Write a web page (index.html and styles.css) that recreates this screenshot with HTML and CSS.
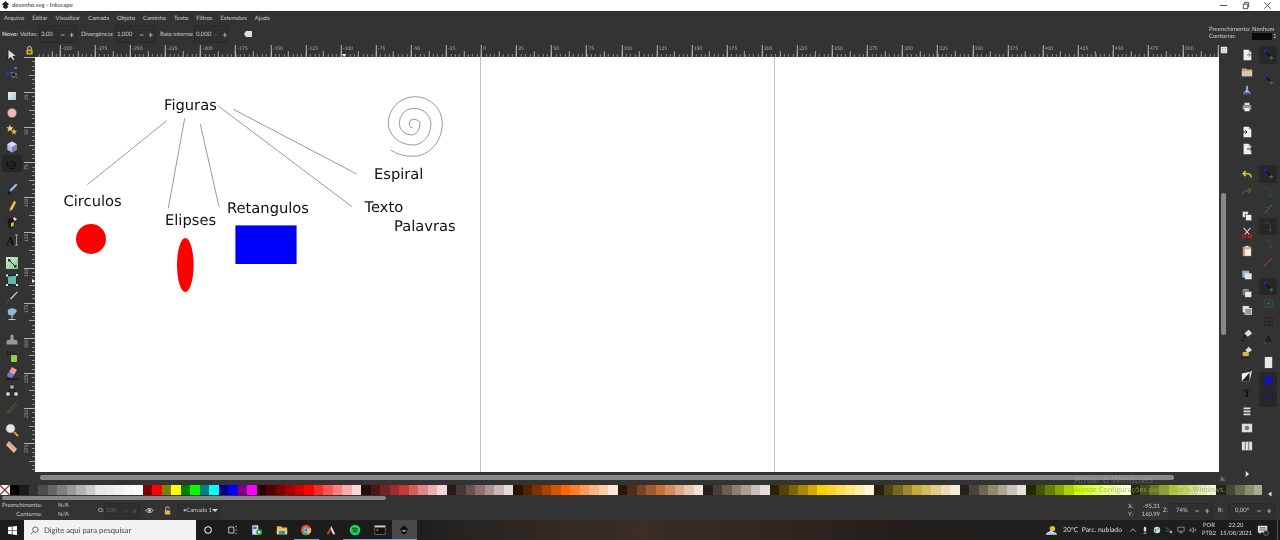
FILE: index.html
```html
<!DOCTYPE html>
<html lang="pt-BR">
<head>
<meta charset="utf-8">
<title>desenho.svg - Inkscape</title>
<link rel="stylesheet" href="styles.css">
</head>
<body>
<svg class="defs" aria-hidden="true">
  <symbol id="snapnode" viewBox="0 0 14 14"><path d="M4 4L10 10" stroke="#111" stroke-width="1.6"/><rect x="2" y="2" width="3" height="3" fill="#2222cc"/><path d="M10 8.5v4M8 10.5h4" stroke="#2f7a3a" stroke-width="1.4"/></symbol>
  <symbol id="snapcurve" viewBox="0 0 14 14"><path d="M3 3C9 3 10 7 9 11" fill="none" stroke="#2f5535" stroke-width="1"/><path d="M9 9v4M7 11h4" stroke="#2a5a34" stroke-width="1"/></symbol>
  <symbol id="snapline" viewBox="0 0 14 14"><path d="M3 12L11 3" stroke="#3d7040" stroke-width="1.1"/><path d="M3 6h5" stroke="#2f5a36"/></symbol>
  <symbol id="doc" viewBox="0 0 14 14"><path d="M3 1h6l3 3v9H3z" fill="#eee"/><path d="M9 1v3h3" fill="#aaa"/></symbol>
</svg>
<div class="app">
  <header class="titlebar">
    <svg class="tlogo" viewBox="0 0 10 10"><path d="M5 0L9 4 7 5 8 7 5 9 2 7 3 5 1 4z" fill="#222"/></svg>
    <span class="ttext">desenho.svg - Inkscape</span>
    <div class="winctl">
      <svg viewBox="0 0 10 10"><path d="M1 5h8" stroke="#444"/></svg>
      <svg viewBox="0 0 10 10"><path d="M2.5 3.5h5v5h-5zM4 3.5V1.5h4.500v5H7.500" fill="none" stroke="#444"/></svg>
      <svg viewBox="0 0 10 10"><path d="M1.500 1.500l7 7M8.500 1.500l-7 7" stroke="#444"/></svg>
    </div>
  </header>
  <nav class="menubar">
    <span>Arquivo</span><span>Editar</span><span>Visualizar</span><span>Camada</span><span>Objeto</span><span>Caminho</span><span>Texto</span><span>Filtros</span><span>Extensões</span><span>Ajuda</span>
  </nav>
  <div class="toolbar">
    <b class="tl-new">Novo:</b><span class="tl-v">Voltas:</span>
    <div class="spin spin-a"><span class="val">3,00</span><i>−</i><i>+</i></div>
    <span class="tl-lab">Divergência:</span>
    <div class="spin spin-b"><span class="val">1,000</span><i>−</i><i>+</i></div>
    <span class="tl-lab">Raio interno:</span>
    <div class="spin spin-c"><span class="val">0,000</span><i class="dim">−</i><i>+</i></div>
    <svg class="tl-erase" viewBox="0 0 10 8"><path d="M3 1h6v6H3L1 4z" fill="#ddd"/></svg>
    <div class="fillstroke">
      <div>Preenchimento: Nenhum</div>
      <div class="fs-row"><span class="fs-lab">Contorno:</span><span class="fs-swatch"></span><span>1</span></div>
    </div>
  </div>

  <div class="workspace">
    <aside class="toolbox">
      <div class="tool"><svg viewBox="0 0 14 14"><path d="M3 1V12L6 9.500 8 13 10 12 8 8.500 11.500 8z" fill="#ddd" stroke="#111" stroke-width=".8"/></svg></div>
      <div class="tool g1"><svg viewBox="0 0 14 14"><path d="M2 7L9 2" stroke="#335" stroke-width=".8"/><circle cx="3" cy="8" r="2" fill="#2233cc"/><rect x="9" y="1" width="3" height="2" fill="#5566cc"/><path d="M6 6L8 12 9 10 11.500 12 12.500 11 10 9 12 8z" fill="#111" stroke="#bbb" stroke-width=".5"/></svg></div>
      <div class="tool g6"><svg viewBox="0 0 14 14"><defs><linearGradient id="gr1" x1="0" y1="0" x2="1" y2="1"><stop offset="0" stop-color="#eef3f8"/><stop offset="1" stop-color="#a9c3dc"/></linearGradient></defs><rect x="2.500" y="2.500" width="9" height="9" fill="url(#gr1)" stroke="#333"/></svg></div>
      <div class="tool"><svg viewBox="0 0 14 14"><circle cx="7" cy="7" r="4.700" fill="#f0b6bf" stroke="#555" stroke-width=".6"/></svg></div>
      <div class="tool"><svg viewBox="0 0 14 14"><path d="M5 1.500l1.200 2.500 2.700.3-2 1.800.6 2.700L5 7.500 2.600 8.800l.5-2.700-2-1.800 2.700-.3z" fill="#e8d56a" stroke="#444" stroke-width=".4"/><path d="M9 5.500l1 2 2.300.3-1.700 1.500.4 2.300L9 10.500l-2 1.100.4-2.300-1.700-1.500L8 7.500z" fill="#d8c040" stroke="#444" stroke-width=".4"/></svg></div>
      <div class="tool"><svg viewBox="0 0 14 14"><path d="M7 1.500l4.700 2.700v5.600L7 12.500 2.300 9.800V4.200z" fill="#b4b6e6"/><path d="M7 7l4.700-2.800v5.600L7 12.500z" fill="#7d80bd"/><path d="M7 7L2.300 4.200 7 1.500l4.700 2.700z" fill="#d6d8f4"/></svg></div>
      <div class="tool tool-on"><svg viewBox="0 0 14 14"><path d="M7 7.500c1-1 2-.2 1.600 1-.5 1.300-2.800 1.500-3.800 0-1.100-1.700.2-4 2.400-4 2.500 0 4 2.400 3 4.700-1.100 2.400-4.200 3-6.400 1.500C2 9.300 1.500 6.500 3 4.300" fill="none" stroke="#0c0c0c" stroke-width="1"/></svg></div>
      <div class="tool g8"><svg viewBox="0 0 14 14"><path d="M11 1.500l1.500 1.500L6 9.500 4.500 8z" fill="#9fc3dd"/><path d="M4 9.500C3 9.500 3 11 2 12.500 4 12.500 5.500 11.500 5.500 10.500z" fill="#111"/></svg></div>
      <div class="tool"><svg viewBox="0 0 14 14"><path d="M9 1.500l2.500 1.500-4 8-3 1.500.3-3.300z" fill="#edc547" stroke="#222" stroke-width=".5"/></svg></div>
      <div class="tool"><svg viewBox="0 0 14 14"><path d="M3 3C2 7 3 11 6 13c3-2 4-5 3-9L7 2z" fill="#191919"/><path d="M6 7l3-1-.5 4L6 11z" fill="#e4c23f"/><path d="M9 1l3 2-2 2-2-2z" fill="#ddd"/></svg></div>
      <div class="tool"><svg viewBox="0 0 14 14"><text x="1" y="11.500" class="ic-a">A</text><path d="M11.500 2v10M10 2h3M10 12h3" stroke="#bbb" stroke-width=".8"/></svg></div>
      <div class="tool g6"><svg viewBox="0 0 14 14"><defs><linearGradient id="gr2" x1="0" y1="0" x2="1" y2="1"><stop offset="0" stop-color="#d8ecd8"/><stop offset="1" stop-color="#7cc58a"/></linearGradient></defs><rect x="1" y="1" width="12" height="12" fill="url(#gr2)"/><path d="M4 4L10 10" stroke="#222"/><rect x="3" y="3" width="2.500" height="2.500" fill="#333"/><rect x="9" y="9" width="2.500" height="2.500" fill="#333"/></svg></div>
      <div class="tool"><svg viewBox="0 0 14 14"><path d="M2 3L12 2 11.500 12 2.500 11.500z" fill="#62b7a5" stroke="#111"/><g fill="#eee"><rect x="1" y="1.500" width="2" height="2"/><rect x="11" y="1" width="2" height="2"/><rect x="11" y="11" width="2" height="2"/><rect x="1" y="11" width="2" height="2"/></g></svg></div>
      <div class="tool"><svg viewBox="0 0 14 14"><path d="M12 1.500l.8.800L6 9.500 5 8.500z" fill="#ccc"/><path d="M5 8.500L2 12.500l4-3z" fill="#111" stroke="#999" stroke-width=".3"/></svg></div>
      <div class="tool"><svg viewBox="0 0 14 14"><path d="M4 2c3-1.500 7-.5 8 2l-4 5-4-1C2 6 2.500 3 4 2z" fill="#8fb8d4"/><path d="M7 9v2.500M3.500 12.500h7" stroke="#bfc9bf" stroke-width="1.200"/></svg></div>
      <div class="tool g8"><svg viewBox="0 0 14 14"><path d="M1.500 12.500v-4l4-1V4c0-2 3-2 3 0v3.500l4 1v4z" fill="#9a9a9a"/></svg></div>
      <div class="tool"><svg viewBox="0 0 14 14"><rect x="6" y="6" width="6" height="7" rx="1" fill="#8ed04a"/><rect x="7.500" y="4" width="3" height="2" fill="#222"/><g fill="#111"><rect x="2" y="2" width="1.500" height="1.500"/><rect x="4.500" y="3.500" width="1.500" height="1.500"/><rect x="2" y="5" width="1.500" height="1.500"/></g></svg></div>
      <div class="tool"><svg viewBox="0 0 14 14"><path d="M7 1l5 3-3 5-5-3z" fill="#ee9999"/><path d="M4 6l5 3-2 3-4-1-1-2z" fill="#7777dd"/><path d="M1 13h12" stroke="#111"/></svg></div>
      <div class="tool"><svg viewBox="0 0 14 14"><path d="M7 5L3 10M7 5l4 5" stroke="#111"/><rect x="5" y="2" width="4" height="4" fill="#9fb8cc" stroke="#111" stroke-width=".6"/><rect x="1" y="9" width="4" height="4" fill="#ddd" stroke="#111" stroke-width=".6"/><rect x="9" y="9" width="4" height="4" fill="#ddd" stroke="#111" stroke-width=".6"/></svg></div>
      <div class="tool"><svg viewBox="0 0 14 14"><path d="M2 12L11 3M5 12L12 5M2 12h4" stroke="#59653e" stroke-width=".9" fill="none"/></svg></div>
      <div class="tool g6"><svg viewBox="0 0 14 14"><circle cx="5.500" cy="5.500" r="4.300" fill="#dfe6ec" stroke="#bbb" stroke-width=".6"/><path d="M9 9l4 4" stroke="#e0a030" stroke-width="2"/></svg></div>
      <div class="tool"><svg viewBox="0 0 14 14"><path d="M4 1l8 8-3 4L1 5z" fill="#e8b8a0"/><path d="M4 3.500l1 1M6 5.500l1 1M8 7.500l1 1" stroke="#555" stroke-width=".7"/></svg></div>
    </aside>

    <div class="center">
      <div class="ruler-row">
        <div class="corner"><svg viewBox="0 0 10 10"><rect x="1.500" y="4" width="7" height="5.500" rx=".5" fill="#d9a520"/><path d="M3 4V2.500a2 2 0 0 1 4 0V4" fill="none" stroke="#ddd"/><rect x="3.500" y="6" width="3" height="1.500" fill="#222"/></svg></div>
        <div class="hruler">
          <div class="rlabels"><span>-300</span><span>-275</span><span>-250</span><span>-225</span><span>-200</span><span>-175</span><span>-150</span><span>-125</span><span>-100</span><span>-75</span><span>-50</span><span>-25</span><span>0</span><span>25</span><span>50</span><span>75</span><span>100</span><span>125</span><span>150</span><span>175</span><span>200</span><span>225</span><span>250</span><span>275</span><span>300</span><span>325</span><span>350</span><span>375</span><span>400</span><span>425</span><span>450</span><span>475</span><span>500</span></div>
          <i class="hmark"></i>
        </div>
        <div class="corner2"><svg viewBox="0 0 10 10"><rect x="1" y="1" width="8" height="8" rx="1" fill="#eee"/><rect x="3" y="3" width="4" height="4" fill="none" stroke="#999" stroke-width=".7"/></svg></div>
      </div>
      <div class="mid">
        <div class="vruler">
          <div class="vlabels"><span>25</span><span>50</span><span>75</span><span>100</span><span>125</span><span>150</span><span>175</span><span>200</span><span>225</span><span>250</span><span>275</span></div>
          <i class="vmark"></i>
        </div>
        <main class="canvas">
          <svg class="drawing" viewBox="35 57 1184 415">
            <path class="guide" d="M480.500 57V472M774.500 57V472"/>
            <g class="links">
              <path d="M166.700 120.700L87.300 184.700"/>
              <path d="M184.700 118.300L168.300 208.300"/>
              <path d="M200.300 124L219 206.700"/>
              <path d="M218.300 106L352 206.700"/>
              <path d="M233.300 109.300L356.700 174"/>
            </g>
            <path class="spiral" d="M390.700 150Q400 156.300 413.300 156.300A29 33 0 0 0 442.300 123.300A27.300 26.600 0 0 0 415 96.700A26.700 26.600 0 0 0 388.300 123.300A25 21.700 0 0 0 413.300 145A17.700 21.700 0 0 0 431 123.300A17.700 15 0 0 0 413.300 108.300A14 15 0 0 0 399.300 123.300A12.400 11.700 0 0 0 411.700 135A8.300 11.700 0 0 0 420 123.300A6.700 4 0 0 0 413.300 119.300A4 4 0 0 0 409.300 123.300A3.200 4.400 0 0 0 412.500 127.700"/>
            <g class="labels">
              <text x="164" y="109.500">Figuras</text>
              <text x="63.500" y="206">Circulos</text>
              <text x="165" y="225">Elipses</text>
              <text x="227" y="213">Retangulos</text>
              <text x="374" y="178.500">Espiral</text>
              <text x="364.500" y="212">Texto</text>
              <text x="394" y="231">Palavras</text>
            </g>
            <circle class="red" cx="91" cy="239" r="15"/>
            <ellipse class="red" cx="185.300" cy="265" rx="8.300" ry="27"/>
            <rect class="blue" x="235.400" y="225.400" width="61.200" height="38.600"/>
          </svg>
        </main>
        <div class="vscroll"><i></i></div>
      </div>
      <div class="hscroll"><i></i><svg viewBox="0 0 10 10"><path d="M1 9V1L9 9z" fill="#30a030"/><path d="M2 1L9 5 5 6z" fill="#3355dd"/><path d="M1 9L6 6 9 9z" fill="#dd3355"/></svg></div>
    </div>

    <aside class="dock">
      <div class="cmds">
        <div class="cmd"><svg viewBox="0 0 14 14"><use href="#doc"/><path d="M7 7h4M9 5l2 2-2 2" stroke="#36a" fill="none"/></svg></div>
        <div class="cmd"><svg viewBox="0 0 14 14"><path d="M1 3h5l1 1h6v8H1z" fill="#bda985"/><path d="M1 6h12v6H1z" fill="#d8c8a8"/></svg></div>
        <div class="cmd"><svg viewBox="0 0 14 14"><path d="M6 2h2v5l3 3v2H3v-2l3-3z" fill="#a8b4dc"/><path d="M3 10h8v2H3z" fill="#3a4fa8"/></svg></div>
        <div class="cmd"><svg viewBox="0 0 14 14"><path d="M4 2h6v3H4z" fill="#ddd"/><path d="M2 5h10v5H2z" fill="#999"/><path d="M4 8h6v4H4z" fill="#eee"/></svg></div>
        <div class="cmd g7"><svg viewBox="0 0 14 14"><use href="#doc"/><path d="M1 7h6M5 5l2 2-2 2" stroke="#111" fill="none"/></svg></div>
        <div class="cmd"><svg viewBox="0 0 14 14"><use href="#doc"/><path d="M7 7h6M11 5l2 2-2 2" stroke="#111" fill="none"/></svg></div>
        <div class="cmd g7"><svg viewBox="0 0 14 14"><path d="M12 11C12 7 8 6 3 6.500M5.500 3.500L2.500 6.500l3 3" fill="none" stroke="#d9c23c" stroke-width="1.800"/></svg></div>
        <div class="cmd"><svg viewBox="0 0 14 14"><path d="M2 11C2 7 6 6 11 6.500M8.500 3.500l3 3-3 3" fill="none" stroke="#4d5c3c" stroke-width="1.600"/></svg></div>
        <div class="cmd g7"><svg viewBox="0 0 14 14"><rect x="1.500" y="1.500" width="7" height="7" fill="#ddd" stroke="#333" stroke-width=".6"/><rect x="5.500" y="5.500" width="7" height="7" fill="#eee" stroke="#333" stroke-width=".6"/></svg></div>
        <div class="cmd"><svg viewBox="0 0 14 14"><path d="M3 1l7 8M11 1L4 9" stroke="#ddd" stroke-width="1.200"/><circle cx="3.500" cy="10.500" r="2" fill="none" stroke="#d02020" stroke-width="1.400"/><circle cx="10.500" cy="10.500" r="2" fill="none" stroke="#d02020" stroke-width="1.400"/></svg></div>
        <div class="cmd"><svg viewBox="0 0 14 14"><rect x="2" y="2" width="10" height="11" fill="#c8a060"/><rect x="4.500" y="4.500" width="7" height="8" fill="#eee"/><rect x="5" y="1" width="4" height="2" fill="#ddd"/></svg></div>
        <div class="cmd g7"><svg viewBox="0 0 14 14"><rect x="1.500" y="2" width="8" height="8" fill="#9fb0c0"/><rect x="4.500" y="5" width="8" height="7" fill="#dbe5ef"/></svg></div>
        <div class="cmd"><svg viewBox="0 0 14 14"><rect x="1.500" y="2" width="8" height="8" fill="#888" stroke="#222" stroke-width=".5"/><rect x="4.500" y="5" width="8" height="7" fill="#e8e8e8" stroke="#222" stroke-width=".5"/></svg></div>
        <div class="cmd"><svg viewBox="0 0 14 14"><rect x="1.500" y="2" width="8" height="8" fill="#ddd" stroke="#222" stroke-width=".5"/><rect x="4.500" y="5" width="8" height="7" fill="#999" stroke="#eee" stroke-width=".8"/></svg></div>
        <div class="cmd g7"><svg viewBox="0 0 14 14"><path d="M9 1l4 4-5 4-4-4z" fill="#ddd"/><path d="M2 11l1.500-3 2 2z" fill="#112"/><path d="M1 13h3M1 3h2" stroke="#111"/></svg></div>
        <div class="cmd"><svg viewBox="0 0 14 14"><path d="M9 1l4 4-5 3-3-3z" fill="#ddd"/><path d="M2 7h7v5H2z" fill="#d8b850"/><path d="M1 13h8" stroke="#111"/></svg></div>
        <div class="cmd g6"><svg viewBox="0 0 14 14"><path d="M1 13V4L11 2 13 1 12 4 10 13z" fill="#eee"/><path d="M1 13L10 3 10 13z" fill="#222"/><path d="M9 3l4-2-1 3z" fill="#d8b850"/></svg></div>
        <div class="cmd"><svg viewBox="0 0 14 14"><text x="7" y="11.500" class="ic-t">T</text></svg></div>
        <div class="cmd"><svg viewBox="0 0 14 14"><path d="M3 3h8v2H3zM3 6.500h8v2H3zM3 10h8v2H3z" fill="#ddd"/></svg></div>
        <div class="cmd"><svg viewBox="0 0 14 14"><rect x="1" y="2" width="12" height="10" fill="#ddd"/><circle cx="7" cy="7" r="2.500" fill="#777"/></svg></div>
        <div class="cmd"><svg viewBox="0 0 14 14"><rect x="1" y="2" width="12" height="10" fill="#ddd"/><path d="M5 2v10M9 2v10" stroke="#666"/></svg></div>
        <div class="cmd garrow"><svg viewBox="0 0 14 14"><path d="M5.500 3.500L9.500 7l-4 3.500z" fill="#ddd"/></svg></div>
      </div>
      <div class="snaps">
        <div class="snap on"><svg viewBox="0 0 14 14"><use href="#snapnode"/></svg></div>
        <div class="snap s7"><svg viewBox="0 0 14 14"><use href="#snapnode"/></svg></div>
        <div class="snap s14"><svg viewBox="0 0 14 14"><path d="M3 3h8v8H3z" fill="none" stroke="#383838"/></svg></div>
        <div class="snap s20"><svg viewBox="0 0 14 14"><path d="M3 3h8v8H3z" fill="none" stroke="#383838"/></svg></div>
        <div class="snap on s6"><svg viewBox="0 0 14 14"><use href="#snapnode"/></svg></div>
        <div class="snap"><svg viewBox="0 0 14 14"><use href="#snapcurve"/></svg></div>
        <div class="snap"><svg viewBox="0 0 14 14"><use href="#snapline"/></svg></div>
        <div class="snap on"><svg viewBox="0 0 14 14"><use href="#snapcurve"/></svg></div>
        <div class="snap"><svg viewBox="0 0 14 14"><use href="#snapcurve"/></svg></div>
        <div class="snap"><svg viewBox="0 0 14 14"><path d="M3 12L11 3" stroke="#a83030" stroke-width="1.200"/><path d="M2 10l2 2" stroke="#3d7040"/></svg></div>
        <div class="snap on s7"><svg viewBox="0 0 14 14"><use href="#snapnode"/></svg></div>
        <div class="snap"><svg viewBox="0 0 14 14"><rect x="3" y="3" width="8" height="8" fill="none" stroke="#2f5a36"/><path d="M7 5v4M5 7h4" stroke="#2f6a3a"/></svg></div>
        <div class="snap"><svg viewBox="0 0 14 14"><rect x="3" y="3" width="8" height="8" fill="none" stroke="#222"/><path d="M7 5v4M5 7h4" stroke="#222"/></svg></div>
        <div class="snap"><svg viewBox="0 0 14 14"><text x="7" y="11" class="ic-sa">A</text><path d="M2 12h3" stroke="#3d7040"/></svg></div>
        <div class="snap s6"><svg viewBox="0 0 14 14"><path d="M3 1h8v12H3z" fill="#e8e8e8"/></svg></div>
        <div class="snap on"><svg viewBox="0 0 14 14"><rect x="2.500" y="2.500" width="9" height="9" fill="#1414a8"/></svg></div>
        <div class="snap on"><svg viewBox="0 0 14 14"><path d="M3 3v8M11 3v8M7 5v4" stroke="#1a1a70" stroke-width="1.500"/></svg></div>
      </div>
    </aside>
  </div>

  <div class="palette">
    <span class="sw sw-none"><svg viewBox="0 0 10 10"><path d="M0 0l10 10M10 0L0 10" stroke="#8a2020" stroke-width="1.200"/></svg></span><span class="sw" style="background:#000"></span><span class="sw" style="background:#1a1a1a"></span><span class="sw" style="background:#333"></span><span class="sw" style="background:#4d4d4d"></span><span class="sw" style="background:#666"></span><span class="sw" style="background:#808080"></span><span class="sw" style="background:#999"></span><span class="sw" style="background:#b3b3b3"></span><span class="sw" style="background:#ccc"></span><span class="sw" style="background:#e6e6e6"></span><span class="sw" style="background:#ececec"></span><span class="sw" style="background:#f2f2f2"></span><span class="sw" style="background:#f9f9f9"></span><span class="sw" style="background:#fff"></span><span class="sw" style="background:#800000"></span><span class="sw" style="background:#f00"></span><span class="sw" style="background:#808000"></span><span class="sw" style="background:#ff0"></span><span class="sw" style="background:#008000"></span><span class="sw" style="background:#0f0"></span><span class="sw" style="background:#008080"></span><span class="sw" style="background:#0ff"></span><span class="sw" style="background:#000080"></span><span class="sw" style="background:#00f"></span><span class="sw" style="background:#800080"></span><span class="sw" style="background:#f0f"></span><span class="sw" style="background:#2b0000"></span><span class="sw" style="background:#500"></span><span class="sw" style="background:#800000"></span><span class="sw" style="background:#a00"></span><span class="sw" style="background:#d40000"></span><span class="sw" style="background:#f00"></span><span class="sw" style="background:#ff2a2a"></span><span class="sw" style="background:#f55"></span><span class="sw" style="background:#ff8080"></span><span class="sw" style="background:#faa"></span><span class="sw" style="background:#ffd5d5"></span><span class="sw" style="background:#280b0b"></span><span class="sw" style="background:#501616"></span><span class="sw" style="background:#782121"></span><span class="sw" style="background:#a02c2c"></span><span class="sw" style="background:#c83737"></span><span class="sw" style="background:#d35f5f"></span><span class="sw" style="background:#de8787"></span><span class="sw" style="background:#e9afaf"></span><span class="sw" style="background:#f4d7d7"></span><span class="sw" style="background:#241c1c"></span><span class="sw" style="background:#483737"></span><span class="sw" style="background:#6c5353"></span><span class="sw" style="background:#916f6f"></span><span class="sw" style="background:#ac9393"></span><span class="sw" style="background:#c8b7b7"></span><span class="sw" style="background:#e3dbdb"></span><span class="sw" style="background:#2b1100"></span><span class="sw" style="background:#520"></span><span class="sw" style="background:#803300"></span><span class="sw" style="background:#a40"></span><span class="sw" style="background:#d45500"></span><span class="sw" style="background:#f60"></span><span class="sw" style="background:#ff7f2a"></span><span class="sw" style="background:#f95"></span><span class="sw" style="background:#ffb380"></span><span class="sw" style="background:#fca"></span><span class="sw" style="background:#ffe6d5"></span><span class="sw" style="background:#28170b"></span><span class="sw" style="background:#502d16"></span><span class="sw" style="background:#784421"></span><span class="sw" style="background:#a05a2c"></span><span class="sw" style="background:#c87137"></span><span class="sw" style="background:#d38d5f"></span><span class="sw" style="background:#deaa87"></span><span class="sw" style="background:#e9c6af"></span><span class="sw" style="background:#f4e3d7"></span><span class="sw" style="background:#241f1c"></span><span class="sw" style="background:#483e37"></span><span class="sw" style="background:#6c5d53"></span><span class="sw" style="background:#917c6f"></span><span class="sw" style="background:#ac9d93"></span><span class="sw" style="background:#c8beb7"></span><span class="sw" style="background:#e3dedb"></span><span class="sw" style="background:#2b2200"></span><span class="sw" style="background:#540"></span><span class="sw" style="background:#806600"></span><span class="sw" style="background:#a80"></span><span class="sw" style="background:#d4aa00"></span><span class="sw" style="background:#fc0"></span><span class="sw" style="background:#ffd42a"></span><span class="sw" style="background:#fd5"></span><span class="sw" style="background:#ffe680"></span><span class="sw" style="background:#fea"></span><span class="sw" style="background:#fff6d5"></span><span class="sw" style="background:#28220b"></span><span class="sw" style="background:#504416"></span><span class="sw" style="background:#786721"></span><span class="sw" style="background:#a0892c"></span><span class="sw" style="background:#c8ab37"></span><span class="sw" style="background:#d3bc5f"></span><span class="sw" style="background:#decd87"></span><span class="sw" style="background:#e9ddaf"></span><span class="sw" style="background:#f4eed7"></span><span class="sw" style="background:#24221c"></span><span class="sw" style="background:#484537"></span><span class="sw" style="background:#6c6753"></span><span class="sw" style="background:#918a6f"></span><span class="sw" style="background:#aca793"></span><span class="sw" style="background:#c8c4b7"></span><span class="sw" style="background:#e3e2db"></span><span class="sw" style="background:#222b00"></span><span class="sw" style="background:#450"></span><span class="sw" style="background:#668000"></span><span class="sw" style="background:#8a0"></span><span class="sw" style="background:#aad400"></span><span class="sw" style="background:#cf0"></span><span class="sw" style="background:#d4ff2a"></span><span class="sw" style="background:#df5"></span><span class="sw" style="background:#e5ff80"></span><span class="sw" style="background:#efa"></span><span class="sw" style="background:#f6ffd5"></span><span class="sw" style="background:#22280b"></span><span class="sw" style="background:#445016"></span><span class="sw" style="background:#677821"></span><span class="sw" style="background:#89a02c"></span><span class="sw" style="background:#abc837"></span><span class="sw" style="background:#bcd35f"></span><span class="sw" style="background:#cdde87"></span><span class="sw" style="background:#dde9af"></span><span class="sw" style="background:#eef4d7"></span><span class="sw" style="background:#22241c"></span><span class="sw" style="background:#454837"></span><span class="sw" style="background:#676c53"></span><span class="sw" style="background:#8a916f"></span><span class="sw" style="background:#a9ac93"></span>
  </div>
  <div class="palscroll"><i></i><svg viewBox="0 0 6 6"><path d="M4.500 .5L1 3l3.500 2.500z" fill="#ddd"/></svg></div>

  <footer class="status">
    <div class="st-labels"><span>Preenchimento:</span><span>Contorno:</span></div>
    <div class="st-vals"><span>N/A</span><span>N/A</span></div>
    <span class="st-o">O:</span>
    <div class="spin spin-o"><span class="val dimtxt">100</span><i class="dim">−</i><i class="dim">+</i></div>
    <svg class="st-ic st-eye" viewBox="0 0 10 10"><path d="M1 5c2-3 6-3 8 0-2 3-6 3-8 0z" fill="none" stroke="#ddd"/><circle cx="5" cy="5" r="1.500" fill="#ddd"/></svg>
    <svg class="st-ic st-lock" viewBox="0 0 10 10"><rect x="2" y="5" width="6" height="4.500" fill="#d8b850"/><path d="M3 5V3a2 2 0 0 1 4 0" fill="none" stroke="#ddd"/></svg>
    <div class="layer"><span>•Camada 1</span><b></b></div>
    <div class="coords">
      <div class="cx"><span>X:</span><span>-95,31</span></div>
      <div class="cx"><span>Y:</span><span>160,99</span></div>
    </div>
    <span class="st-z">Z:</span>
    <div class="spin spin-z"><span class="val">74%</span><i>−</i><i>+</i></div>
    <span class="st-r">R:</span>
    <div class="spin spin-r"><span class="val">0,00°</span><i>−</i><i>+</i></div>
  </footer>

  <div class="taskbar">
    <svg class="tb-start" viewBox="0 0 10 10"><path d="M0 1.200L4.300.6v4H0zM5 .5L10 0v4.600H5zM0 5.300h4.300v4L0 8.800zM5 5.300h5V10L5 9.400z" fill="#fff"/></svg>
    <div class="search">
      <svg viewBox="0 0 10 10"><circle cx="6" cy="4" r="3" fill="none" stroke="#333" stroke-width=".8"/><path d="M3.800 6.200L1 9" stroke="#333" stroke-width=".8"/></svg>
      <span>Digite aqui para pesquisar</span>
    </div>
    <div class="tb-apps">
      <div class="app-ic"><svg viewBox="0 0 14 14"><circle cx="7" cy="7" r="3.800" fill="none" stroke="#eee" stroke-width="1.200"/></svg></div>
      <div class="app-ic"><svg viewBox="0 0 14 14"><path d="M2 3.500h6v7H2zM10 3h1.500M10 7h1.500M10 11h1.500" fill="none" stroke="#ddd"/></svg></div>
      <div class="app-ic"><svg viewBox="0 0 14 14"><rect x="1.500" y="1.500" width="7" height="11" fill="#cfe0f0"/><rect x="2.500" y="3" width="4" height="3" fill="#3a78c0"/><circle cx="9.500" cy="9.500" r="3.500" fill="#2fa84a"/><path d="M8.500 7.800l3 1.700-3 1.700z" fill="#fff"/></svg></div>
      <div class="app-ic"><svg viewBox="0 0 14 14"><path d="M1 2.500h5l1 1.500h6v8H1z" fill="#e8b84a"/><rect x="1" y="6" width="12" height="6" fill="#f2cc62"/><rect x="3.500" y="8" width="7" height="4" fill="#3a8cc8"/></svg></div>
      <div class="app-ic mark"><svg viewBox="0 0 14 14"><circle cx="7" cy="7" r="6" fill="#e04a3a"/><path d="M7 7L2 10.500A6 6 0 0 0 9.500 12.500z" fill="#3aa858"/><path d="M7 7l2.500 5.500A6 6 0 0 0 12.500 4.500z" fill="#f2c230"/><circle cx="7" cy="7" r="2.700" fill="#4285f4" stroke="#eee" stroke-width=".8"/></svg></div>
      <div class="app-ic"><svg viewBox="0 0 14 14"><path d="M7 2L2 12h2.500L7 7z" fill="#d8372f"/><path d="M7 2l5 10H9.500L7 7z" fill="#eee"/></svg></div>
      <div class="app-ic mark"><svg viewBox="0 0 14 14"><circle cx="7" cy="7" r="6.200" fill="#1ed760"/><path d="M3.500 5.200c2.500-.7 5-.5 7 .7M4 7.300c2-.5 4.200-.4 6 .6M4.500 9.300c1.600-.4 3.300-.3 4.800.5" fill="none" stroke="#111" stroke-width="1"/></svg></div>
      <div class="app-ic mark"><svg viewBox="0 0 14 14"><rect x="1" y="2" width="12" height="10" fill="#111" stroke="#bbb" stroke-width=".5"/><rect x="1" y="2" width="12" height="2" fill="#ccc"/><path d="M3 6l2 1-2 1" fill="none" stroke="#ddd" stroke-width=".6"/></svg></div>
      <div class="app-ic mark active"><svg viewBox="0 0 14 14"><path d="M7 1L13 7 10 8 11 10 7 13 3 10 4 8 1 7z" fill="#111" stroke="#888" stroke-width=".3"/><path d="M4.500 7h5L7 9.500z" fill="#7fb0d8"/></svg></div>
    </div>
    <div class="tray">
      <svg class="weather" viewBox="0 0 14 12"><circle cx="8" cy="4" r="3" fill="#f0b73a"/><path d="M1 10.500c0-2 1.500-3 3-3 .8-1.500 4-2 5 0 2 0 4 1 4 3z" fill="#bcd8f0"/></svg>
      <span class="wtxt">20°C&nbsp; Parc. nublado</span>
      <svg class="ti" viewBox="0 0 10 10"><path d="M1.500 7L5 3.500 8.500 7" fill="none" stroke="#ddd" stroke-width=".9"/></svg>
      <svg class="ti" viewBox="0 0 10 10"><rect x="3.500" y="1" width="3" height="6" rx="1.500" fill="#ddd"/><path d="M5 7v2M3 9.500h4" stroke="#ddd" stroke-width=".8"/></svg>
      <svg class="ti" viewBox="0 0 10 10"><circle cx="5" cy="5" r="4" fill="#ddd"/><path d="M2 3l3 2-2 3zM6 2l2 2-2 1z" fill="#1a9a60"/></svg>
      <svg class="ti" viewBox="0 0 10 10"><path d="M1 2c3 1 5 3 6 6M1 5c1.500.5 2.500 1.500 3 3" fill="none" stroke="#999" stroke-width=".7"/><circle cx="7.500" cy="7.500" r="1.500" fill="#bbb"/></svg>
      <svg class="ti" viewBox="0 0 10 10"><path d="M1 1.500h8v5H1zM5 6.500v2M3 8.500h4" fill="none" stroke="#ccc" stroke-width=".7"/></svg>
      <svg class="ti" viewBox="0 0 10 10"><path d="M1 4h2l2.500-2v6L3 6H1z" fill="none" stroke="#ccc" stroke-width=".7"/><path d="M7 3.500l2 3M9 3.500l-2 3" stroke="#ccc" stroke-width=".6"/></svg>
      <div class="tb-lang"><span>POR</span><span>PTB2</span></div>
      <div class="tb-clock"><span>22:20</span><span>15/08/2021</span></div>
      <svg class="tb-note" viewBox="0 0 14 14"><path d="M1 2h11v8H5L3 12v-2H1z" fill="#ddd"/><path d="M3 4.500h7M3 7h7" stroke="#222" stroke-width=".8"/><circle cx="10.500" cy="10.500" r="2.800" fill="#222" stroke="#aaa" stroke-width=".6"/></svg>
      <i class="tb-sliver"></i>
    </div>
  </div>

  <aside class="watermark">
    <div class="wm1">Ativar o Windows</div>
    <div class="wm2">Acesse Configurações para ativar o Windows.</div>
  </aside>
</div>
</body>
</html>
```
FILE: styles.css
```css
* { box-sizing: border-box; }
html, body { margin: 0; padding: 0; }
body { width: 1280px; height: 540px; overflow: hidden; background: #333; font-family: Lato, "Open Sans", "Liberation Sans", sans-serif; color: #ccc; text-rendering: geometricPrecision; }
.defs { position: absolute; width: 0; height: 0; }
svg { display: block; flex: none; }
i { font-style: normal; }

.app { position: relative; width: 1280px; height: 540px; display: flex; flex-direction: column; filter: blur(0.35px); }

/* title + menu */
.titlebar { height: 12px; background: #fff; border-bottom: 1px solid #2a2a2a; display: flex; align-items: center; padding-left: 1px; color: #333; font-size: 6px; }
.tlogo { width: 9px; height: 9px; }
.ttext { margin-left: 2px; }
.winctl { margin-left: auto; display: flex; gap: 13px; padding-right: 8px; }
.winctl svg { width: 9px; height: 9px; }

.menubar { height: 13px; display: flex; align-items: center; gap: 8px; padding-left: 4px; font-size: 5.900px; background: #333; }

.toolbar { height: 18px; display: flex; align-items: center; padding-left: 2px; font-size: 6px; background: #333; white-space: nowrap; }
.tl-new { width: 18px; font-weight: 700; flex: none; }
.tl-v { width: 19px; flex: none; }
.tl-lab { width: 34px; margin-left: 4px; flex: none; }
.tl-erase { width: 10px; height: 8px; margin-left: 14px; }
.fillstroke { margin-left: auto; width: 71px; line-height: 7.500px; margin-top: -2px; white-space: nowrap; }
.fs-row { display: flex; align-items: center; }
.fs-lab { width: 43px; flex: none; }
.fs-swatch { width: 20px; height: 7px; margin-right: 1px; background: #0a0a0a; flex: none; }

.spin { height: 18px; display: flex; align-items: center; border-radius: 2px; background: #2f2f2f; border: 1px solid #2a2a2a; font-size: 6px; padding-left: 1px; flex: none; }
.spin i { width: 9px; text-align: center; font-size: 9px; color: #ddd; flex: none; }
.spin .val { flex: 1; }
.spin .dim, .dimtxt { color: #666; }
.spin i.dim { color: #666; }
.spin-a { width: 38px; }
.spin-b { width: 41px; }
.spin-c { width: 35px; }

/* workspace */
.workspace { height: 442px; display: flex; }
.toolbox { width: 24px; flex: none; padding-top: 3px; display: flex; flex-direction: column; }
.tool { height: 17px; display: flex; align-items: center; justify-content: center; flex: none; }
.tool svg { width: 14px; height: 14px; }
.tool-on { background: #262626; border-radius: 3px; margin: 0 2px; }
.g1 { margin-top: 1px; }
.g6 { margin-top: 6px; }
.g7 { margin-top: 7px; }
.g8 { margin-top: 8px; }
.ic-a { font: 700 12px "Liberation Serif", serif; fill: #0c0c0c; }
.ic-t { font: 700 13px "Liberation Serif", serif; fill: #0c0c0c; text-anchor: middle; }
.ic-sa { font: 700 9px "Liberation Sans", sans-serif; fill: #111; text-anchor: middle; }

.center { width: 1204px; flex: none; display: flex; flex-direction: column; }
.ruler-row { height: 14px; display: flex; }
.corner { width: 11px; display: flex; align-items: center; justify-content: center; }
.corner svg { width: 9px; height: 9px; }
.corner2 { width: 9px; display: flex; align-items: center; justify-content: center; }
.corner2 svg { width: 8px; height: 8px; }

.hruler {
  width: 1184px; position: relative; overflow: hidden;
  background-image:
    repeating-linear-gradient(90deg, #b5b5b5 0 1px, transparent 1px 35.100px),
    repeating-linear-gradient(90deg, #a0a0a0 0 1px, transparent 1px 17.550px),
    repeating-linear-gradient(90deg, #8c8c8c 0 1px, transparent 1px 4.388px);
  background-size: 100% 12px, 100% 6px, 100% 3px;
  background-position: 24.800px 100%, 24.800px 100%, 24.800px 100%;
  background-repeat: repeat-x;
}
.rlabels { display: flex; padding-left: 25px; font-size: 4.900px; line-height: 8px; color: #aaa; padding-top: 2px; }
.rlabels span { width: 35.100px; flex: none; padding-left: 2px; }
.hmark { position: absolute; left: 307px; bottom: 0; border: 2.500px solid transparent; border-top: 3px solid #fff; border-bottom: 0; }

.mid { height: 415px; display: flex; }
.vruler {
  width: 11px; position: relative; overflow: hidden;
  background-image:
    repeating-linear-gradient(180deg, #b5b5b5 0 1px, transparent 1px 35.100px),
    repeating-linear-gradient(180deg, #a0a0a0 0 1px, transparent 1px 17.550px),
    repeating-linear-gradient(180deg, #8c8c8c 0 1px, transparent 1px 4.388px);
  background-size: 11px 100%, 6px 100%, 3px 100%;
  background-position: 100% 0, 100% 0, 100% 0;
  background-repeat: repeat-y;
}
.vlabels { padding-top: 35px; font-size: 4.900px; line-height: 7px; color: #aaa; }
.vlabels span { display: block; height: 35.100px; padding-bottom: 2px; text-align: right; writing-mode: vertical-rl; transform: rotate(180deg); }
.vmark { position: absolute; top: 222px; right: 0; border: 2.500px solid transparent; border-left: 3px solid #fff; border-right: 0; }

.canvas { width: 1184px; background: #fff; overflow: hidden; }
.drawing { width: 1184px; height: 415px; }
.guide { stroke: #c4c4c4; stroke-width: 1; fill: none; }
.links path { stroke: #555; stroke-width: .6; fill: none; }
.spiral { stroke: #555; stroke-width: .6; fill: none; }
.labels text { font: 14.700px "DejaVu Sans", sans-serif; fill: #111; }
.red { fill: #f00; }
.blue { fill: #00f; }

.vscroll { width: 9px; padding: 136px 2px 0; }
.vscroll i { display: block; width: 5px; height: 142px; background: #888; border-radius: 2px; }
.hscroll { height: 13px; display: flex; align-items: center; padding-left: 16px; }
.hscroll i { display: block; width: 1134px; height: 5px; background: #888; border-radius: 2px; margin-top: -2px; }
.hscroll svg { width: 6px; height: 7px; margin-left: 46px; }

.dock { width: 52px; flex: none; display: flex; padding-left: 10px; }
.cmds { width: 18px; padding-top: 3px; display: flex; flex-direction: column; }
.cmd { height: 17.500px; flex: none; display: flex; align-items: center; justify-content: center; }
.cmd svg { width: 12px; height: 12px; }
.garrow { margin-top: 11px; }
.snaps { width: 22px; margin-left: 2px; padding-top: 3px; display: flex; flex-direction: column; }
.snap { height: 17.500px; flex: none; width: 18px; margin-left: 1px; border-radius: 3px; display: flex; align-items: center; justify-content: center; }
.snap svg { width: 13px; height: 13px; }
.snap.on { background: #272727; }
.s6 { margin-top: 6.500px; }
.s7 { margin-top: 7.500px; }
.s14 { margin-top: 14.500px; }
.s20 { margin-top: 20.500px; }

/* palette */
.palette { height: 10px; width: 1262px; display: flex; overflow: hidden; }
.sw { width: 9.500px; height: 10px; flex: none; }
.sw-none { background: #fff; }
.sw-none svg { width: 9.500px; height: 10px; }
.palscroll { height: 6px; display: flex; align-items: center; padding-left: 2px; position: relative; }
.palscroll i { display: block; width: 384px; height: 4px; background: #888; border-radius: 2px; }
.palscroll svg { position: absolute; left: 1267px; top: -4px; width: 6px; height: 6px; }

/* status bar */
.status { height: 19px; display: flex; align-items: center; font-size: 5.800px; background: #333; white-space: nowrap; }
.st-labels { width: 42px; display: flex; flex-direction: column; align-items: flex-end; line-height: 8.500px; }
.st-vals { width: 20px; margin-left: 16px; display: flex; flex-direction: column; line-height: 8.500px; }
.st-o { margin-left: 20px; width: 6px; }
.spin-o { width: 36px; height: 16px; }
.st-ic { width: 9px; height: 9px; }
.st-eye { margin-left: 4.500px; }
.st-lock { margin-left: 9px; }
.layer { width: 44px; height: 16px; margin-left: 5.500px; display: flex; align-items: center; justify-content: space-between; padding: 0 5px 0 6px; background: #2f2f2f; border-radius: 2px; font-size: 5.800px; }
.layer b { border: 3px solid transparent; border-top: 3.500px solid #ddd; border-bottom: 0; }
.coords { margin-left: auto; width: 32px; line-height: 8px; }
.cx { display: flex; justify-content: space-between; }
.st-z { margin-left: 1px; width: 7px; text-align: right; margin-right: 1px; }
.spin-z { width: 44px; height: 16px; padding-left: 6px; }
.spin-z i, .spin-r i { width: 10px; }
.st-r { margin-left: 5px; width: 10px; }
.spin-r { width: 47px; height: 16px; padding-left: 6px; margin-right: 5px; }

/* taskbar */
.taskbar {
  height: 20px; display: flex; align-items: center; color: #ddd; font-size: 6.800px;
  background: linear-gradient(90deg, #1c1c1c 0 30%, #2c2723 40%, #3a2e25 50%, #332a24 56%, #241f1c 70%, #1f2020 85%, #1a1a1c 100%);
}
.tb-start { width: 9px; height: 9px; margin-left: 8px; }
.search { width: 172px; height: 20px; margin-left: 7px; padding-left: 6px; background: #f2f2f2; color: #444; display: flex; align-items: center; gap: 5px; font-size: 7.700px; }
.search svg { width: 9px; height: 9px; }
.tb-apps { display: flex; }
.app-ic { width: 24.500px; height: 20px; display: flex; align-items: center; justify-content: center; }
.app-ic svg { width: 12px; height: 12px; }
.mark { border-bottom: 1px solid #77a8d0; }
.active { background: #4a4a4a; }
.tray { margin-left: auto; display: flex; align-items: center; height: 20px; }
.weather { width: 13px; height: 11px; margin-right: 5px; }
.wtxt { margin-right: 6px; width: 60px; white-space: nowrap; }
.ti { width: 8px; height: 8px; margin-right: 4px; }
.tb-lang, .tb-clock { display: flex; flex-direction: column; align-items: center; line-height: 8.500px; font-size: 5.800px; }
.tb-lang { margin-left: 1px; width: 14px; }
.tb-clock { width: 28px; margin-left: 6px; }
.tb-note { width: 12px; height: 12px; margin-left: 7px; }
.tb-sliver { display: block; width: 1px; height: 20px; background: #555; margin-left: 8px; margin-right: 2px; }

/* activation watermark */
.watermark { position: absolute; left: 1074px; top: 474px; pointer-events: none; white-space: nowrap; font-family: "Open Sans", sans-serif; }
.wm1 { font-size: 9.800px; line-height: 11px; color: rgba(200, 200, 200, .28); }
.wm2 { font-size: 7.200px; line-height: 10px; color: rgba(160, 160, 100, .75); }
```
